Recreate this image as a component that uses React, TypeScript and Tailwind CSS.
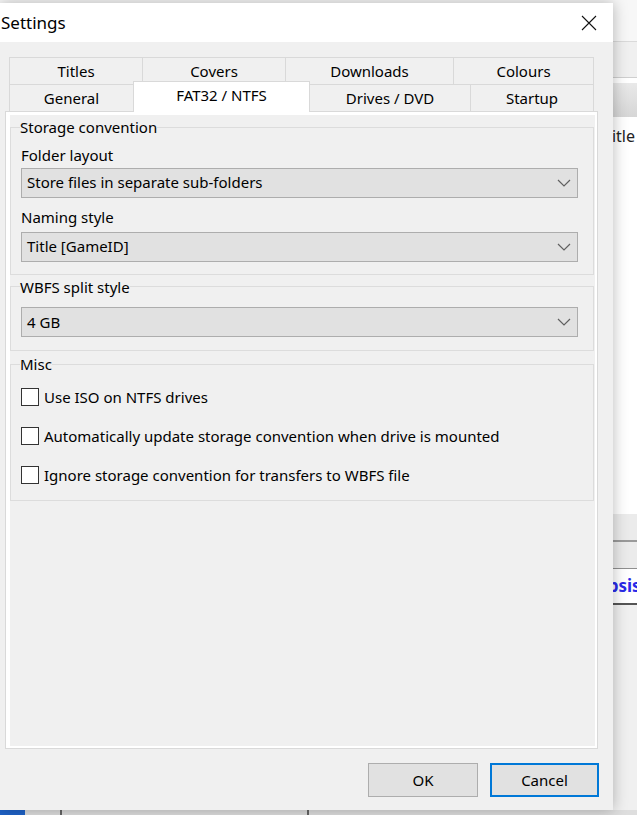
import React from "react";

const font = { fontFamily: '"Noto Sans", "Open Sans", Arial, sans-serif' };

function Select({ value }: { value: string }) {
  return (
    <div className="flex h-[30px] items-center justify-between border border-[#adadad] bg-[#e1e1e1] pl-[5px] pr-[6px] text-[15px] text-black">
      <span>{value}</span>
      <svg width="14" height="8" viewBox="0 0 14 8">
        <path d="M1 1l6 6 6-6" fill="none" stroke="#606060" strokeWidth="1.2" />
      </svg>
    </div>
  );
}

function Check({ label }: { label: string }) {
  return (
    <div className="flex h-[39px] items-center gap-[5px] text-[15px] text-black">
      <div className="h-[18px] w-[18px] border border-[#333] bg-white" />
      <span>{label}</span>
    </div>
  );
}

export default function App() {
  const row1 = [
    { t: "Titles", w: "w-[133px]" },
    { t: "Covers", w: "w-[143px]" },
    { t: "Downloads", w: "w-[168px]" },
    { t: "Colours", w: "w-[141px]" },
  ];

  return (
    <div className="relative h-[815px] w-[637px] overflow-hidden bg-[#f0f0f0]" style={font}>
      {/* BACKGROUND APP */}
      <div className="flex h-full flex-col">
        <div className="h-[42px] border-b border-[#dadada] bg-[#f7f7f7]" />
        <div className="h-[36px] border-b border-[#cfcfcf] bg-[#f0f0f0]" />
        <div className="h-[5px] bg-white" />
        <div className="h-[34px] bg-gradient-to-b from-[#e9e9e9] to-[#d6d6d6]" />
        <div className="h-[397px] bg-white pl-[603px] pt-[7px] text-[16px] text-[#222]">Title</div>
        <div className="h-[28px] border-b-2 border-[#9a9a9a] bg-[#ebebeb]" />
        <div className="h-[27px] border-b border-[#8f8f8f] bg-[#ebebeb]" />
        <div className="flex h-[36px] items-center border-b-2 border-[#555] bg-white pl-[567px] text-[17px] font-bold text-[#2a2ae8]">
          Synopsis
        </div>
        <div className="flex-1 bg-[#f0f0f0]" />
        <div className="flex h-[5px] bg-[#dedede]">
          <div className="w-[25px] bg-[#1f63c9]" />
          <div className="ml-[35px] w-[2px] bg-[#666]" />
          <div className="ml-[245px] w-[2px] bg-[#666]" />
        </div>
      </div>

      {/* SETTINGS DIALOG */}
      <div className="absolute left-0 top-[3px] flex h-[807px] w-[613px] flex-col bg-[#f0f0f0] shadow-[0_0_14px_rgba(0,0,0,0.28)]">
        <div className="flex h-[39px] items-center justify-between bg-white pr-[16px]">
          <span className="pl-[1px] text-[17px] text-black">Settings</span>
          <svg width="16" height="16" viewBox="0 0 16 16">
            <path d="M1 1l14 14M15 1L1 15" stroke="#111" strokeWidth="1.1" />
          </svg>
        </div>

        <div className="flex flex-1 flex-col px-[5px] pt-[15px]">
          {/* TABS */}
          <div className="ml-[4px] w-[585px] text-[15px] text-black">
            <div className="flex h-[27px]">
              {row1.map((tab, i) => (
                <div
                  key={tab.t}
                  className={`flex ${tab.w} items-center justify-center border-l border-t border-[#d9d9d9] ${i === 3 ? "border-r" : ""}`}
                >
                  {tab.t}
                </div>
              ))}
            </div>
            <div className="flex h-[27px] items-end">
              <div className="flex h-[27px] w-[124px] items-center justify-center border-l border-t border-[#d9d9d9]">
                General
              </div>
              <div className="relative z-10 -mb-[1px] flex h-[31px] w-[177px] items-start justify-center border-x border-t border-[#d9d9d9] bg-white pt-[2px]">
                FAT32 / NTFS
              </div>
              <div className="flex h-[27px] w-[160px] items-center justify-center border-t border-[#d9d9d9]">
                Drives / DVD
              </div>
              <div className="flex h-[27px] w-[124px] items-center justify-center border-x border-t border-[#d9d9d9]">
                Startup
              </div>
            </div>
          </div>

          {/* TAB PANEL */}
          <div className="h-[638px] w-[593px] border border-[#d9d9d9] bg-white pb-[2px] pl-[4px] pr-[2px] pt-[3px]">
            <div className="flex h-full flex-col gap-[1px] bg-[#f0f0f0] pr-[1px] text-[15px] text-black">
              <fieldset className="mt-[1px] border border-[#dcdcdc] pb-[12px] pl-[10px] pr-[15px]">
                <legend className="-ml-[1px]">Storage convention</legend>
                <div className="mt-[6px] leading-[20px]">Folder layout</div>
                <div className="mt-[3px]">
                  <Select value="Store files in separate sub-folders" />
                </div>
                <div className="mt-[9px] leading-[20px]">Naming style</div>
                <div className="mt-[5px]">
                  <Select value="Title [GameID]" />
                </div>
              </fieldset>

              <fieldset className="border border-[#dcdcdc] pb-[13px] pl-[10px] pr-[15px]">
                <legend className="-ml-[1px]">WBFS split style</legend>
                <div className="mt-[9px]">
                  <Select value="4 GB" />
                </div>
              </fieldset>

              <fieldset className="mt-[1px] border border-[#dcdcdc] pb-[5px] pl-[10px] pr-[15px]">
                <legend className="-ml-[1px]">Misc</legend>
                <div className="mt-[2px]">
                  <Check label="Use ISO on NTFS drives" />
                  <Check label="Automatically update storage convention when drive is mounted" />
                  <Check label="Ignore storage convention for transfers to WBFS file" />
                </div>
              </fieldset>
            </div>
          </div>

          {/* BUTTONS */}
          <div className="mt-[14px] flex justify-end gap-[12px] pr-[9px] text-[15px] text-black">
            <button className="h-[34px] w-[110px] border border-[#adadad] bg-[#e1e1e1]">OK</button>
            <button className="h-[34px] w-[109px] border-2 border-[#0078d7] bg-[#e1e1e1]">Cancel</button>
          </div>
        </div>
      </div>
    </div>
  );
}
